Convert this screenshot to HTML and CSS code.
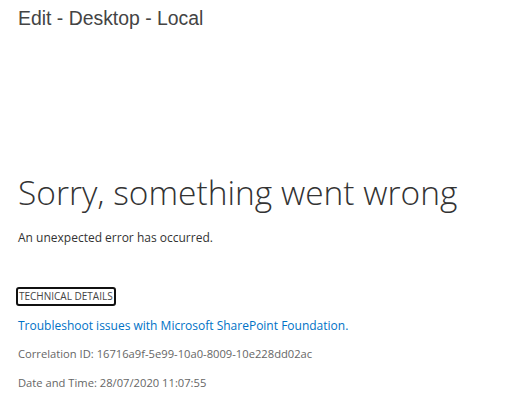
FILE: index.html
```html
<!DOCTYPE html>
<html>
<head>
<meta charset="utf-8">
<link rel="stylesheet" href="styles.css">
</head>
<body>
<div class="page">
  <div class="title">Edit - Desktop - Local</div>
  <div class="content">
    <h1 class="heading">Sorry, something went wrong</h1>
    <p class="message">An unexpected error has occurred.</p>
    <div class="details">
      <span class="details-btn">TECHNICAL DETAILS</span>
    </div>
    <a class="link" href="#">Troubleshoot issues with Microsoft SharePoint Foundation.</a>
    <p class="info">Correlation ID: 16716a9f-5e99-10a0-8009-10e228dd02ac</p>
    <p class="info info-date">Date and Time: 28/07/2020 11:07:55</p>
  </div>
</div>
</body>
</html>
```
FILE: styles.css
```css
html, body {
  margin: 0;
  padding: 0;
  background: #ffffff;
}
.page {
  padding: 7px 0 0 18px;
}
.title {
  font-family: "Liberation Sans", Arial, sans-serif;
  font-size: 19.4px;
  color: #444444;
  line-height: 22px;
}
.content {
  padding-top: 141px;
  font-family: "Open Sans", "Noto Sans", sans-serif;
}
.heading {
  margin: 0;
  font-weight: 300;
  font-size: 33.5px;
  line-height: 44px;
  color: #333333;
}
.message {
  margin: 16px 0 0 0;
  font-size: 12px;
  color: #333333;
  line-height: 16px;
}
.details {
  margin-top: 37px;
}
.details-btn {
  display: inline-block;
  font-size: 10px;
  color: #444444;
  border: 2px solid #111111;
  border-radius: 3px;
  padding: 1px 1px;
  margin-left: -2px;
  line-height: 13px;
}
.link {
  display: block;
  margin-top: 12px;
  font-size: 12px;
  color: #0072c6;
  text-decoration: none;
  line-height: 16px;
}
.info {
  margin: 12px 0 0 0;
  font-size: 11.2px;
  color: #666666;
  line-height: 16px;
}
.info-date {
  margin-top: 13px;
}
```
